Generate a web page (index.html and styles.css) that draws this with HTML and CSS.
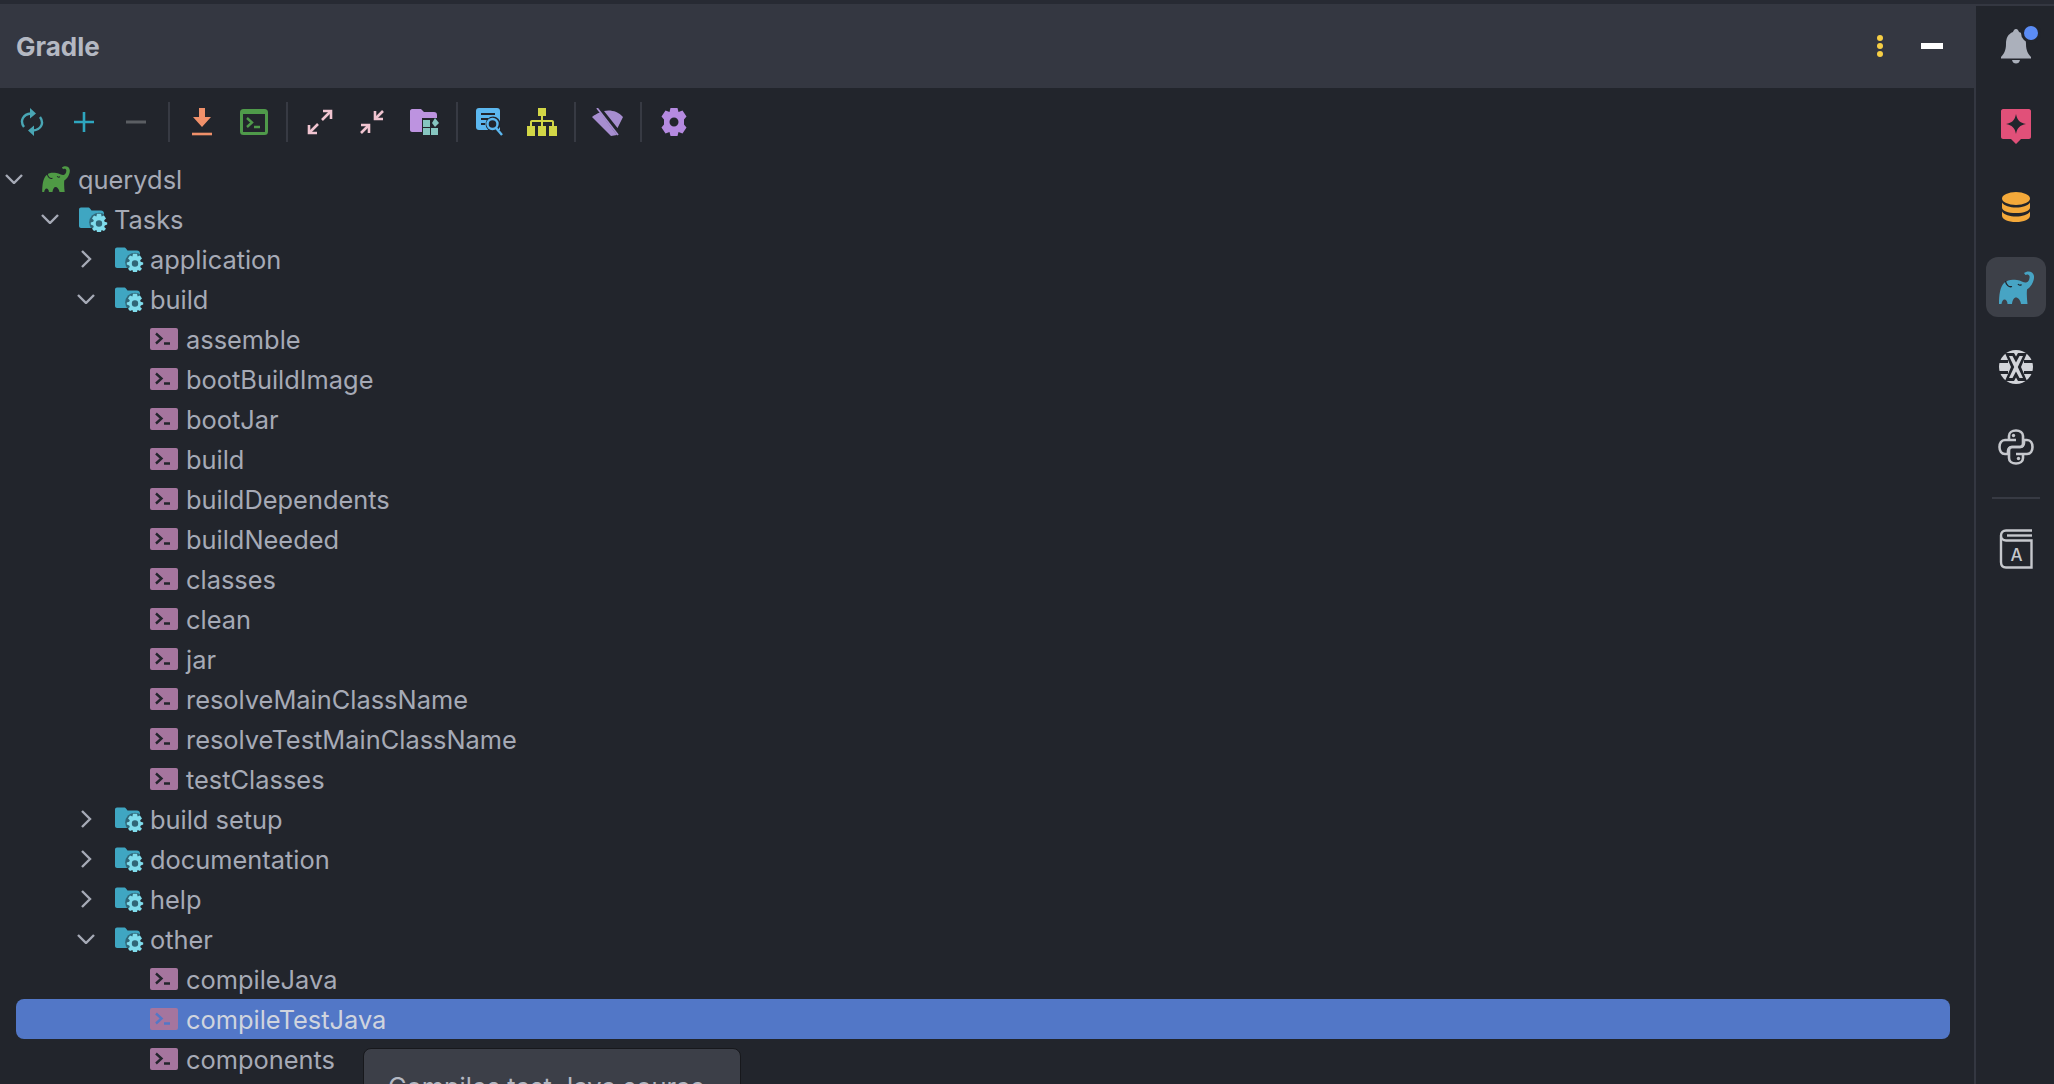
FILE: index.html
```html
<!DOCTYPE html>
<html lang="en">
<head>
<meta charset="utf-8">
<title>Gradle</title>
<link rel="stylesheet" href="styles.css">
</head>
<body>
<svg class="defs" width="0" height="0" aria-hidden="true">
  <symbol id="elephant" viewBox="0 0 35 33">
    <path fill="currentColor" d="M0 33C0 24 1 16 5 12C9 8 14 8.500 18 9C22 9.500 25 12 27 11.500C29.500 11 31 8 30.500 5C30 3.500 28 3 26.500 4L25 2C28 -.5 34 -.5 35 5C35.500 10 32 16 28 18.500C27.500 24 28 28 28.500 33H22C21.500 29 19 26.500 17 26.500C15 26.500 13.500 29 13 33H8.500C8.500 30 7 28.500 5.500 28.500C4 28.500 3 30 2.500 33Z"/>
    <path fill="none" stroke="#22252c" stroke-width="1.300" d="M6.500 10C7 14 10 16.500 13 15.500M19 13C20 14.500 21.500 14.500 22.500 13.500"/>
  </symbol>
  <symbol id="folder" viewBox="0 0 30 26">
    <path fill="#3fa6c2" d="M1 3.500C1 2.400 1.900 1.500 3 1.500H10C11 1.500 11.600 2 12.200 2.800L13.500 4.500H23C24.700 4.500 26 5.800 26 7.500V20C26 21.100 25.100 22 24 22H3C1.900 22 1 21.100 1 20Z"/>
    <circle cx="21" cy="16.500" r="9.800" fill="#22252c" opacity=".5"/>
    <path fill="#7fdcec" fill-rule="evenodd" d="M19 7.800H23L23.600 10.400L26 9.400L28 12.400L26.200 14.200L26.600 15.800L29.200 16.500V18.500L26.800 19.400L26.200 21L28 22.800L26 25L23.600 24L23 26H19L18.400 24L16 25L14 22.800L15.800 21L15.200 19.400L12.800 18.500V16.500L15.200 15.800L15.800 14.200L14 12.400L16 9.400L18.400 10.400ZM21 14.300A3.200 3.200 0 1 0 21 20.700A3.200 3.200 0 1 0 21 14.300Z"/>
  </symbol>
  <symbol id="task" viewBox="0 0 28 22">
    <rect width="28" height="22" rx="2" fill="#a5759e"/>
    <path fill="none" stroke="currentColor" stroke-width="2.400" d="M6 5.500L11.500 10.500L6 15.500M14 15.500H20"/>
  </symbol>
</svg>

<div class="top-strip"></div>
<div class="window">
  <main class="panel">
    <header class="title-bar">
      <h1 class="title">Gradle</h1>
      <div class="title-actions">
        <span class="kebab"><i></i><i></i><i></i></span>
        <span class="minimize"></span>
      </div>
    </header>

    <div class="toolbar">
      <span class="tool"><svg width="24" height="28" viewBox="0 0 24 28"><g fill="none" stroke="#49a6b4" stroke-width="2.400"><path d="M4 19C-.5 13 3 6 11 5.500"/><path d="M20 9C24.500 15 21 22 13 22.500"/></g><path fill="#49a6b4" d="M10 0L16 5.500L10 10.500ZM14 17.500L8 22.500L14 28Z"/></svg></span>
      <span class="tool"><svg width="22" height="22" viewBox="0 0 22 22"><path stroke="#2ea6bf" stroke-width="2.600" d="M11 1V21M1 11H21"/></svg></span>
      <span class="tool"><svg width="22" height="22" viewBox="0 0 22 22"><path stroke="#5b5e63" stroke-width="3" d="M1 11H21"/></svg></span>
      <span class="sep"></span>
      <span class="tool"><svg width="22" height="28" viewBox="0 0 22 28"><path fill="#f0906a" d="M8 0H14V9H20L11 19L2 9H8Z"/><path stroke="#f0906a" stroke-width="2.600" d="M1 26H21"/></svg></span>
      <span class="tool"><svg width="28" height="26" viewBox="0 0 28 26"><rect x="1.500" y="1.500" width="25" height="23" rx="2" fill="#22252c" stroke="#4f9a4a" stroke-width="3"/><path fill="#4f9a4a" d="M1 1H27V5H1Z"/><path fill="none" stroke="#4f9a4a" stroke-width="2.400" d="M7 9L12 13.500L7 18M14 18H20"/></svg></span>
      <span class="sep"></span>
      <span class="tool"><svg width="26" height="26" viewBox="0 0 26 26"><g fill="none" stroke="#f0c4d0" stroke-width="2.600"><path d="M15 11L24 2M2 24L11 15"/><path d="M16 2H24V10M2 16V24H10"/></g></svg></span>
      <span class="tool"><svg width="26" height="26" viewBox="0 0 26 26"><g fill="none" stroke="#f0c4d0" stroke-width="2.600"><path d="M24 2L16 10M2 24L10 16"/><path d="M16 2V10H24M2 16H10V24"/></g></svg></span>
      <span class="tool tool-nudge"><svg width="30" height="26" viewBox="0 0 30 26"><path fill="#bd93e0" d="M0 2C0 1 1 0 2 0H11L14 3H24C26 3 27 4 27 6V21C27 22 26 23 25 23H2C1 23 0 22 0 21Z"/><path fill="#22252c" d="M12 9H30V26H12Z"/><path fill="#86c6c0" d="M13 11H20V18H13ZM13 19H20V26H13ZM21 19H28V26H21ZM25 9L29 14L25 18L22 14Z"/></svg></span>
      <span class="sep"></span>
      <span class="tool"><svg width="28" height="28" viewBox="0 0 28 28"><path fill="#5cb8f0" d="M3 0H21C23 0 24 1 24 3V22H3C1 22 0 21 0 19V3C0 1 1 0 3 0Z"/><path stroke="#22252c" stroke-width="2" d="M5 6H19M5 11H12M5 16H9"/><circle cx="17" cy="16" r="7.500" fill="#22252c"/><circle cx="16.500" cy="16" r="5" fill="#22252c" stroke="#5cb8f0" stroke-width="2.400"/><path stroke="#5cb8f0" stroke-width="2.400" d="M20 20L26 27"/></svg></span>
      <span class="tool"><svg width="30" height="28" viewBox="0 0 30 28"><path fill="#d2d646" d="M11 0H19V8H16V12H25C26.500 12 27 13 27 14V18H30V28H22V18H25V14H16V18H19V28H11V18H14V14H5V18H8V28H0V18H3V14C3 13 3.500 12 5 12H14V8H11Z"/></svg></span>
      <span class="sep"></span>
      <span class="tool"><svg width="32" height="28" viewBox="0 0 32 28"><path fill="#a78ed0" d="M0 9C2.500 7 5 5.500 8 4.500L25 27L19 28ZM12 3C18 1.500 26 3 31 9L25.500 20Z"/><path stroke="#a78ed0" stroke-width="1.800" d="M5 0L26 27"/></svg></span>
      <span class="sep"></span>
      <span class="tool"><svg width="28" height="28" viewBox="0 0 28 28"><path fill="#b58ae0" fill-rule="evenodd" d="M10.500 0H17.500L18.500 4L22.500 2.500L26.500 8.500L24 11.500V16.500L26.500 19.500L22.500 25.500L18.500 24L17.500 28H10.500L9.500 24L5.500 25.500L1.500 19.500L4 16.500V11.500L1.500 8.500L5.500 2.500L9.500 4ZM14 9.500A4.500 4.500 0 1 0 14 18.500A4.500 4.500 0 1 0 14 9.500Z"/></svg></span>
    </div>

    <div class="tree">
      <div class="row l0"><svg class="chev" viewBox="0 0 18 10"><path d="M1 1L9 9L17 1"/></svg><svg class="ico ico-app"><use href="#elephant"/></svg><span>querydsl</span></div>
      <div class="row l1"><svg class="chev" viewBox="0 0 18 10"><path d="M1 1L9 9L17 1"/></svg><svg class="ico ico-folder"><use href="#folder"/></svg><span>Tasks</span></div>
      <div class="row l2"><svg class="chev chev-r" viewBox="0 0 10 18"><path d="M1 1L9 9L1 17"/></svg><svg class="ico ico-folder"><use href="#folder"/></svg><span>application</span></div>
      <div class="row l2"><svg class="chev" viewBox="0 0 18 10"><path d="M1 1L9 9L17 1"/></svg><svg class="ico ico-folder"><use href="#folder"/></svg><span>build</span></div>
      <div class="row l3"><svg class="ico ico-task"><use href="#task"/></svg><span>assemble</span></div>
      <div class="row l3"><svg class="ico ico-task"><use href="#task"/></svg><span>bootBuildImage</span></div>
      <div class="row l3"><svg class="ico ico-task"><use href="#task"/></svg><span>bootJar</span></div>
      <div class="row l3"><svg class="ico ico-task"><use href="#task"/></svg><span>build</span></div>
      <div class="row l3"><svg class="ico ico-task"><use href="#task"/></svg><span>buildDependents</span></div>
      <div class="row l3"><svg class="ico ico-task"><use href="#task"/></svg><span>buildNeeded</span></div>
      <div class="row l3"><svg class="ico ico-task"><use href="#task"/></svg><span>classes</span></div>
      <div class="row l3"><svg class="ico ico-task"><use href="#task"/></svg><span>clean</span></div>
      <div class="row l3"><svg class="ico ico-task"><use href="#task"/></svg><span>jar</span></div>
      <div class="row l3"><svg class="ico ico-task"><use href="#task"/></svg><span>resolveMainClassName</span></div>
      <div class="row l3"><svg class="ico ico-task"><use href="#task"/></svg><span>resolveTestMainClassName</span></div>
      <div class="row l3"><svg class="ico ico-task"><use href="#task"/></svg><span>testClasses</span></div>
      <div class="row l2"><svg class="chev chev-r" viewBox="0 0 10 18"><path d="M1 1L9 9L1 17"/></svg><svg class="ico ico-folder"><use href="#folder"/></svg><span>build setup</span></div>
      <div class="row l2"><svg class="chev chev-r" viewBox="0 0 10 18"><path d="M1 1L9 9L1 17"/></svg><svg class="ico ico-folder"><use href="#folder"/></svg><span>documentation</span></div>
      <div class="row l2"><svg class="chev chev-r" viewBox="0 0 10 18"><path d="M1 1L9 9L1 17"/></svg><svg class="ico ico-folder"><use href="#folder"/></svg><span>help</span></div>
      <div class="row l2"><svg class="chev" viewBox="0 0 18 10"><path d="M1 1L9 9L17 1"/></svg><svg class="ico ico-folder"><use href="#folder"/></svg><span>other</span></div>
      <div class="row l3"><svg class="ico ico-task"><use href="#task"/></svg><span>compileJava</span></div>
      <div class="row l3 selected"><svg class="ico ico-task"><use href="#task"/></svg><span>compileTestJava</span></div>
      <div class="row l3"><svg class="ico ico-task"><use href="#task"/></svg><span>components</span></div>
    </div>
    <div class="tooltip">Compiles test Java source</div>
  </main>

  <aside class="rail">
    <span class="rail-btn bell"><svg width="32" height="36" viewBox="0 0 32 36"><path fill="#abb0bb" d="M16 0C18 0 18.500 2 19 3C24 5 26 9 26 15C26 21 28 25 31 28V29.500H1V28C4 25 6 21 6 15C6 9 8 5 13 3C13.500 2 14 0 16 0Z"/><path fill="#abb0bb" d="M12 31H20C19.500 33.500 18 34.500 16 34.500C14 34.500 12.500 33.500 12 31Z"/></svg></span>
    <span class="rail-btn"><svg width="30" height="36" viewBox="0 0 30 36"><path fill="#e15079" d="M2 0H28C29 0 30 1 30 2V28C30 29 29 30 28 30H20L15 35L10 30H2C1 30 0 29 0 28V2C0 1 1 0 2 0Z"/><path fill="#22252c" d="M15 5C16 11 19 14 25 15C19 16 16 19 15 25C14 19 11 16 5 15C11 14 14 11 15 5Z"/></svg></span>
    <span class="rail-btn"><svg width="28" height="30" viewBox="0 0 28 30"><ellipse cx="14" cy="6.500" rx="14" ry="6.500" fill="#f4a93a"/><path fill="#f4a93a" d="M0 10.500C2 14 8 15.500 14 15.500C20 15.500 26 14 28 10.500V15.500C28 19 22 21 14 21C6 21 0 19 0 15.500Z"/><path fill="#f4a93a" d="M0 19.500C2 23 8 24.500 14 24.500C20 24.500 26 23 28 19.500V23.500C28 27.500 22 30 14 30C6 30 0 27.500 0 23.500Z"/></svg></span>
    <span class="rail-btn active"><svg class="rail-elephant"><use href="#elephant"/></svg></span>
    <span class="rail-btn"><svg width="34" height="34" viewBox="0 0 34 34"><circle cx="17" cy="17" r="17" fill="#d3d5da"/><path stroke="#22252c" stroke-width="3" d="M0 11.500H9M25 11.500H34M0 22.500H9M25 22.500H34"/><path fill="#22252c" d="M6 3H15L17 6.500L19 3H28L22 17L28 31H19L17 27.500L15 31H6L12 17Z"/><path fill="#d3d5da" d="M10 6H13.500L17 12.500L20.500 6H24L18.800 17L24 28H20.500L17 21.500L13.500 28H10L15.200 17Z"/></svg></span>
    <span class="rail-btn"><svg width="36" height="36" viewBox="0 0 36 36"><g fill="none" stroke="#c6c8cd" stroke-width="2.600" stroke-linejoin="round"><path d="M11 11H7C3.500 11 1.500 14 1.500 18C1.500 22 3.500 25 7 25H10V22C10 19.500 12 18 14 18H22C24 18 25 16.500 25 14.500V7C25 3.500 22 1.500 18 1.500C14 1.500 11 3.500 11 7V11H18"/><path d="M25 25H29C32.500 25 34.500 22 34.500 18C34.500 14 32.500 11 29 11H26V14C26 16.500 24 18 22 18H14C12 18 11 19.500 11 21.500V29C11 32.500 14 34.500 18 34.500C22 34.500 25 32.500 25 29V25H18"/></g><circle cx="15.500" cy="6.500" r="1.700" fill="#c6c8cd"/><circle cx="20.500" cy="29.500" r="1.700" fill="#c6c8cd"/></svg></span>
    <span class="rail-sep"></span>
    <span class="rail-btn"><svg width="34" height="40" viewBox="0 0 34 40"><g fill="none" stroke="#c6c8cd" stroke-width="2.400"><path d="M33 1.500H7C4 1.500 2 3.500 2 6.500V33C2 36.500 4 38.500 7 38.500H32.500V11.500H7C4 11.500 2 9 2 6.500"/><path d="M8 6.500H33"/></g><text class="book-letter" x="17.500" y="32">A</text></svg></span>
  </aside>
</div>
```

FILE: styles.css
```css
html, body {
  margin: 0;
  height: 100%;
  overflow: hidden;
  background: #22252c;
}

body {
  display: flex;
  flex-direction: column;
  font-family: Inter, "Liberation Sans", sans-serif;
  font-size: 25.4px;
  color: #a6aab6;
}

.defs {
  position: absolute;
}

.top-strip {
  flex: none;
  height: 4px;
  background: #272a33;
}

.window {
  flex: 1;
  min-height: 0;
  display: flex;
}

.panel {
  position: relative;
  flex: none;
  width: 1974px;
  overflow: hidden;
}

.title-bar {
  height: 84px;
  display: flex;
  align-items: center;
  justify-content: space-between;
  padding: 0 31px 0 16px;
  background: #343741;
}

.title {
  margin: 0;
  font-size: 26px;
  font-weight: 700;
  color: #b4b8c2;
}

.title-actions {
  display: flex;
  align-items: center;
  gap: 38px;
}

.kebab {
  display: flex;
  flex-direction: column;
  gap: 2px;
}

.kebab i {
  width: 6px;
  height: 6px;
  border-radius: 50%;
  background: #f7cf45;
}

.minimize {
  width: 22px;
  height: 6px;
  background: #fff;
}

.toolbar {
  height: 68px;
  display: flex;
  align-items: center;
  padding: 0 6px;
}

.tool {
  width: 52px;
  height: 40px;
  display: flex;
  align-items: center;
  justify-content: center;
}

.tool-nudge svg {
  margin-left: 2px;
}

.sep {
  width: 2px;
  height: 40px;
  margin: 0 6px;
  background: #373a43;
}

.tree {
  padding-top: 3px;
}

.row {
  position: relative;
  height: 40px;
  display: flex;
  align-items: center;
}

.row span,
.row svg {
  position: relative;
}

.row span {
  padding-top: 1px;
}

.l0 { padding-left: 0; }
.l1 { padding-left: 36px; }
.l2 { padding-left: 72px; }
.l3 { padding-left: 150px; }

.chev {
  flex: none;
  width: 28px;
  height: 10px;
  margin-right: 14px;
  fill: none;
  stroke: #a6aab6;
  stroke-width: 2.4;
}

.chev-r {
  height: 18px;
}

.ico {
  flex: none;
  margin-right: 8px;
}

.ico-app {
  width: 28px;
  height: 26px;
  color: #4f9a45;
}

.ico-folder {
  width: 30px;
  height: 26px;
  margin-right: 6px;
}

.ico-task {
  width: 28px;
  height: 22px;
  color: #22252c;
}

.selected {
  color: #cfd4de;
}

.selected::before {
  content: "";
  position: absolute;
  top: 0;
  bottom: 0;
  left: 16px;
  right: 24px;
  border-radius: 8px;
  background: #5277c7;
}

.selected .ico-task {
  color: #5277c7;
}

.tooltip {
  position: absolute;
  left: 363px;
  top: 1044px;
  width: 328px;
  height: 120px;
  padding: 22px 24px;
  border: 1px solid #17181c;
  border-radius: 8px;
  background: #3c3f48;
  color: #b4b8c2;
  white-space: nowrap;
}

.rail {
  flex: 1;
  display: flex;
  flex-direction: column;
  align-items: center;
  padding: 11px 0 0 2px;
  border-left: 2px solid #343741;
  border-top: 2px solid #343741;
}

.rail-btn {
  flex: none;
  width: 60px;
  height: 60px;
  margin-bottom: 20px;
  display: flex;
  align-items: center;
  justify-content: center;
  border-radius: 12px;
}

.bell {
  position: relative;
}

.bell::after {
  content: "";
  position: absolute;
  top: 9px;
  right: 8px;
  width: 14px;
  height: 14px;
  border-radius: 50%;
  background: #5b8cf5;
  box-shadow: 0 0 0 3px #22252c;
}

.active {
  background: #3d4048;
}

.rail-elephant {
  width: 35px;
  height: 33px;
  color: #47a4c4;
}

.rail-sep {
  flex: none;
  width: 48px;
  height: 2px;
  margin: 0 0 20px;
  background: #373a43;
}

.book-letter {
  fill: #c6c8cd;
  font-family: Inter, sans-serif;
  font-size: 17px;
  font-weight: 500;
  text-anchor: middle;
}
```
